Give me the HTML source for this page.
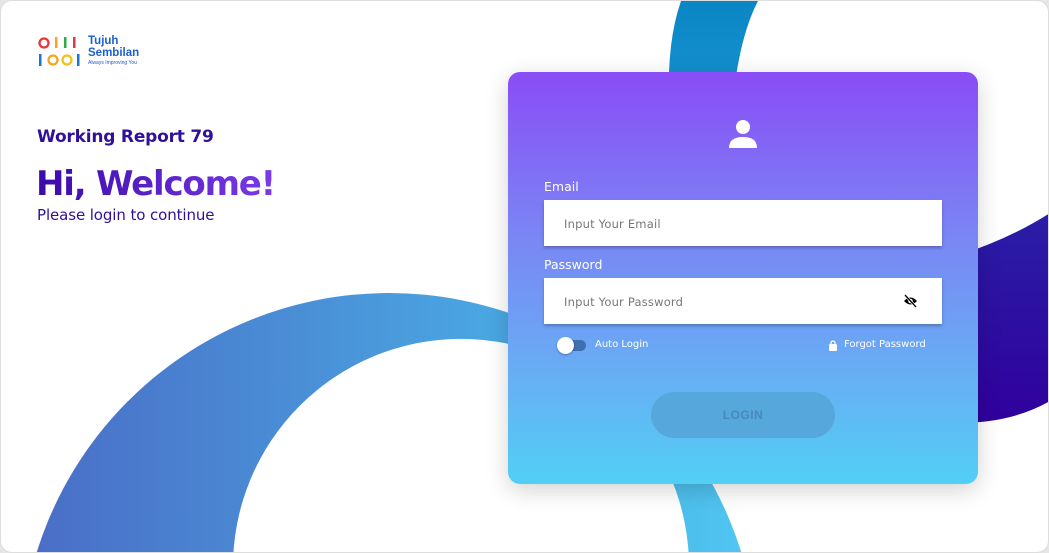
<!DOCTYPE html>
<html><head><meta charset="utf-8"><style>
*{margin:0;padding:0;box-sizing:border-box}
html,body{width:1049px;height:553px;overflow:hidden;background:#e6e6e6;font-family:"DejaVu Sans","Liberation Sans",sans-serif}
.page{position:absolute;left:0;top:0;width:1049px;height:553px;background:#fff;border-radius:12px;overflow:hidden;border:1px solid #ddd}
svg.bg{position:absolute;left:0;top:0}
.t{position:absolute;white-space:nowrap}
.card{position:absolute;left:507px;top:71px;width:470px;height:412px;border-radius:12px;background:linear-gradient(#8a4cf6,#7a86f4 40%,#66b0f4 75%,#52cff5);box-shadow:0 6px 24px rgba(0,0,0,.18)}
.inp{position:absolute;left:36px;width:398px;height:46px;background:#fff;box-shadow:0 2px 3px rgba(0,0,0,.25);font-size:11.5px;color:#777;padding:17px 0 0 20px;letter-spacing:.2px}
.lab{position:absolute;left:36px;color:#fff;font-size:12.5px}
.sm{position:absolute;color:#fff;font-size:10px}
.btn{position:absolute;left:143px;top:320px;width:184px;height:46px;border-radius:23px;background:#56a8dc;color:#4a88bc;font-family:"Liberation Sans",sans-serif;font-weight:bold;font-size:12px;text-align:center;line-height:46px;letter-spacing:.5px}
</style></head><body>
<div class="page">
<svg class="bg" width="1049" height="553">
<defs>
<linearGradient id="g1" x1="0" x2="1" y1="0" y2="0"><stop offset="0" stop-color="#4a6cc6"/><stop offset=".7" stop-color="#4aace4"/><stop offset="1" stop-color="#50c8f2"/></linearGradient>
<linearGradient id="g2" x1="0" x2="0" y1="0" y2="1"><stop offset="0" stop-color="#0a86c4"/><stop offset="1" stop-color="#1a96d4"/></linearGradient>
<linearGradient id="g3" x1="0" x2="0" y1="0" y2="1"><stop offset="0" stop-color="#2a1ea6"/><stop offset="1" stop-color="#30009e"/></linearGradient>
</defs>
<path fill-rule="evenodd" d="M19 661 A369 369 0 1 1 757 661 A369 369 0 1 1 19 661 Z M232 566 A228 228 0 1 0 688 566 A228 228 0 1 0 232 566 Z" fill="url(#g1)"/>
<path d="M680 0 Q666 40 668 100 L668 120 L730 120 Q736 40 757 0 Z" fill="url(#g2)"/>
<path d="M900 270 Q990 250 1049 212 L1049 400 Q1000 428 930 420 Z" fill="url(#g3)"/>
</svg>
<svg class="t" style="left:37px;top:35px" width="46" height="32">
<circle cx="6" cy="7" r="4.5" fill="none" stroke="#e8343c" stroke-width="2.3"/>
<rect x="17" y="1" width="2.5" height="11" fill="#f2a81c"/><rect x="26" y="1" width="2.5" height="11" fill="#2eab49"/><rect x="35" y="1" width="2.5" height="11" fill="#e8343c"/>
<rect x="1" y="18" width="2.5" height="12" fill="#1a74d6"/>
<circle cx="15" cy="24" r="4.5" fill="none" stroke="#f2a81c" stroke-width="2.3"/>
<circle cx="29" cy="24" r="4.5" fill="none" stroke="#f2c21c" stroke-width="2.3"/>
<rect x="39" y="18" width="2.5" height="12" fill="#1a74d6"/>
</svg>
<div class="t" style="left:87px;top:34px;color:#1a5fd0;font-family:'Liberation Sans',sans-serif;font-weight:bold;font-size:11.5px;line-height:12px">Tujuh<br>Sembilan</div>
<div class="t" style="left:87px;top:59px;color:#1a5fd0;font-family:'Liberation Sans',sans-serif;font-size:5px">Always Improving You</div>
<div class="t" style="left:36px;top:126px;color:#30109a;font-size:17px;font-weight:bold;letter-spacing:-.2px">Working Report 79</div>
<div class="t" style="left:35px;top:163px;font-size:34px;font-weight:bold;letter-spacing:-1.2px;background:linear-gradient(90deg,#3a0aa8,#7a3ae8);-webkit-background-clip:text;color:transparent">Hi, Welcome!</div>
<div class="t" style="left:36px;top:205px;color:#30109a;font-size:15px;letter-spacing:-.1px">Please login to continue</div>
<div class="card">
<svg style="position:absolute;left:220px;top:48px" width="30" height="28"><circle cx="15" cy="7" r="7" fill="#fff"/><path d="M1 28 Q1 17 15 17 Q29 17 29 28 Z" fill="#fff"/></svg>
<div class="lab" style="top:107px">Email</div>
<div class="inp" style="top:128px">Input Your Email</div>
<div class="lab" style="top:185px">Password</div>
<div class="inp" style="top:206px">Input Your Password
<svg style="position:absolute;left:359px;top:16px" width="15" height="14" viewBox="0 0 15 14"><path d="M1 7 Q7.5 0 14 7 Q7.5 14 1 7 Z" fill="#000"/><circle cx="7.5" cy="7" r="2.3" fill="#fff"/><line x1="2" y1="1" x2="13" y2="13" stroke="#fff" stroke-width="2.5"/><line x1="2" y1="1" x2="13" y2="13" stroke="#000" stroke-width="1.3"/></svg></div>
<div style="position:absolute;left:52px;top:268px;width:26px;height:11px;border-radius:6px;background:#3f6fb0"></div>
<div style="position:absolute;left:49px;top:265px;width:17px;height:17px;border-radius:50%;background:#fff;box-shadow:0 1px 2px rgba(0,0,0,.3)"></div>
<div class="sm" style="left:87px;top:267px">Auto Login</div>
<svg style="position:absolute;left:321px;top:268px" width="8" height="11"><rect x="0" y="4" width="8" height="7" rx="1" fill="#fff"/><path d="M2 5 V3 A2 2 0 0 1 6 3 V5" fill="none" stroke="#fff" stroke-width="1.3"/></svg>
<div class="sm" style="left:336px;top:267px">Forgot Password</div>
<div class="btn">LOGIN</div>
</div>
</div>
</body></html>
